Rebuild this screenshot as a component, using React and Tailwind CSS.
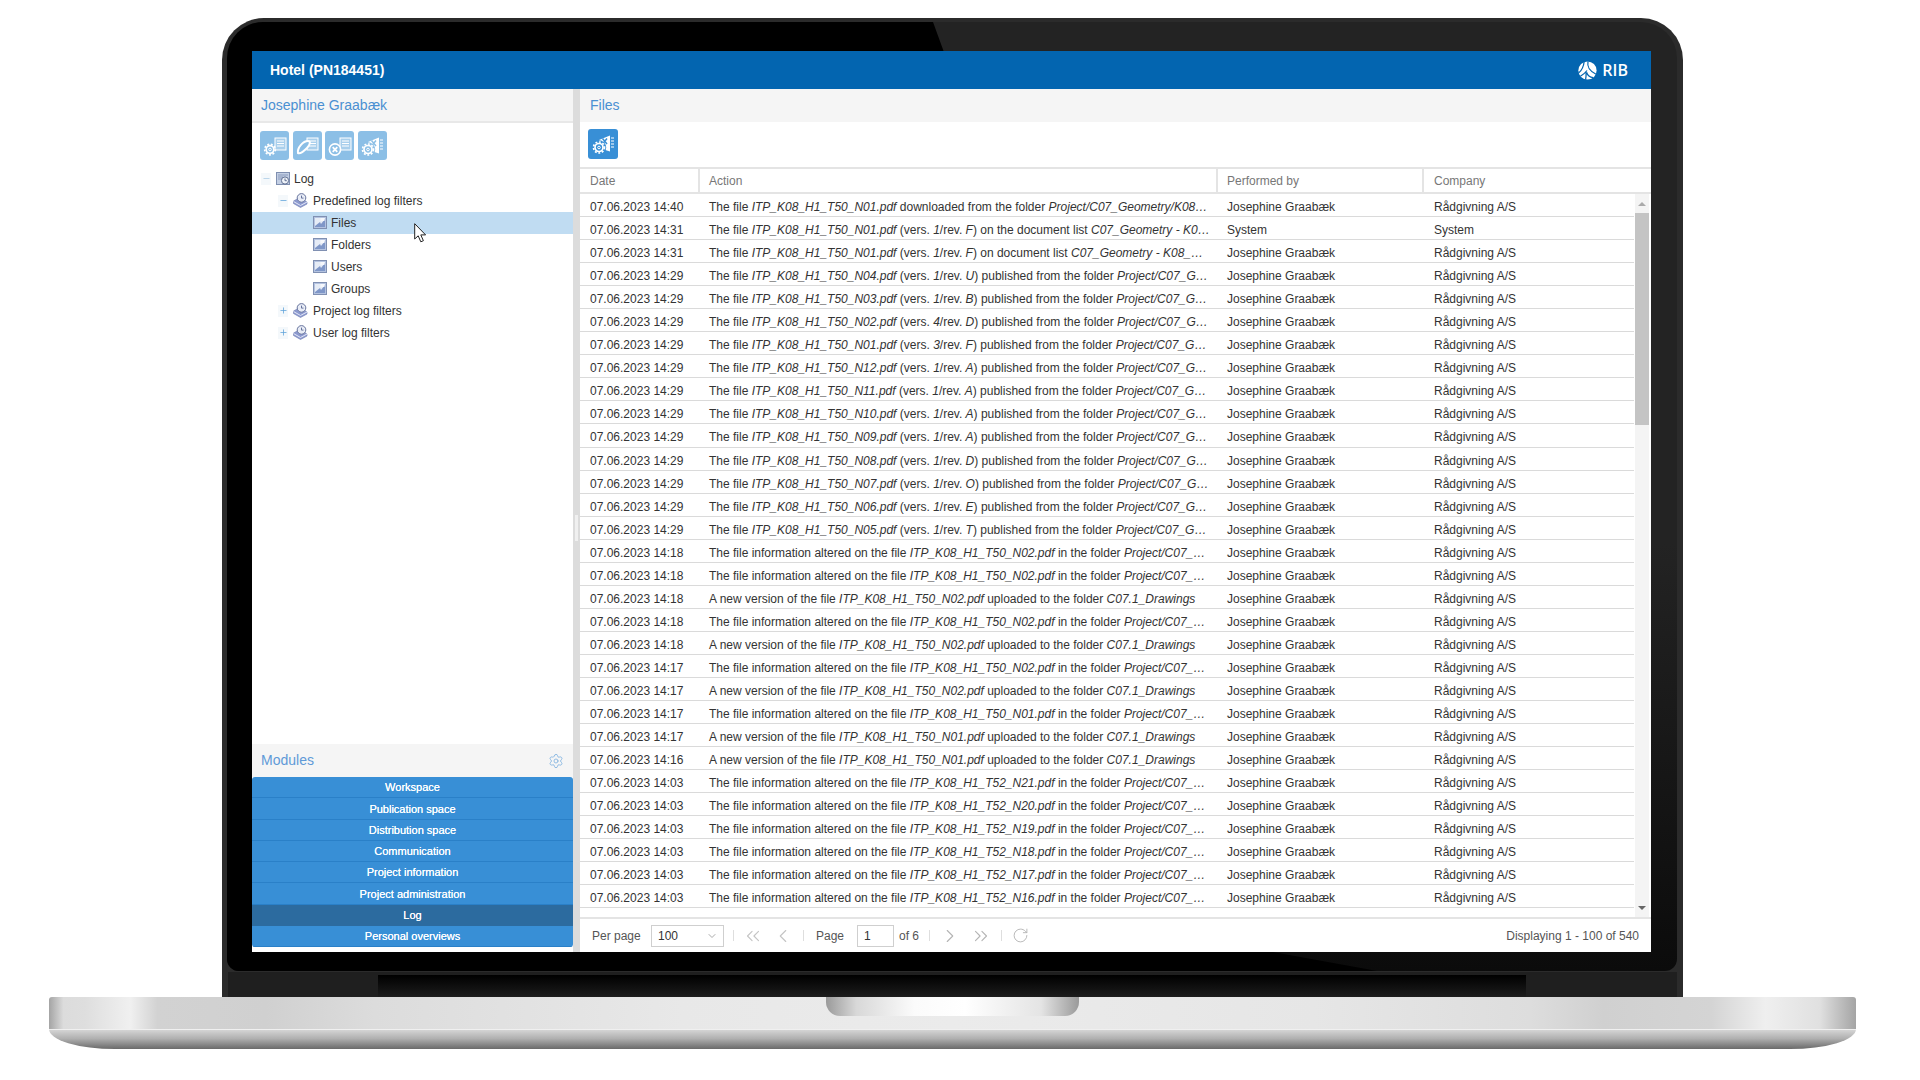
import React from "react";
import { Settings, ChevronDown, ChevronsLeft, ChevronLeft, ChevronRight, ChevronsRight, RotateCw, Plus, Minus } from "lucide-react";

const file = (n) => <i>{`ITP_K08_H1_${n}.pdf`}</i>;
const pub = (n, v, r) => (
  <>The file {file(n)} (vers. <i>{v}</i>/rev. <i>{r}</i>) published from the folder <i>Project/C07_G…</i></>
);
const alt = (n) => (
  <>The file information altered on the file {file(n)} in the folder <i>Project/C07_…</i></>
);
const neu = (n) => (
  <>A new version of the file {file(n)} uploaded to the folder <i>C07.1_Drawings</i></>
);

const rows = [
  ["14:40", <>The file {file("T50_N01")} downloaded from the folder <i>Project/C07_Geometry/K08…</i></>],
  ["14:31", <>The file {file("T50_N01")} (vers. <i>1</i>/rev. <i>F</i>) on the document list <i>C07_Geometry - K0…</i></>, true],
  ["14:31", <>The file {file("T50_N01")} (vers. <i>1</i>/rev. <i>F</i>) on document list <i>C07_Geometry - K08_…</i></>],
  ["14:29", pub("T50_N04", "1", "U")],
  ["14:29", pub("T50_N03", "1", "B")],
  ["14:29", pub("T50_N02", "4", "D")],
  ["14:29", pub("T50_N01", "3", "F")],
  ["14:29", pub("T50_N12", "1", "A")],
  ["14:29", pub("T50_N11", "1", "A")],
  ["14:29", pub("T50_N10", "1", "A")],
  ["14:29", pub("T50_N09", "1", "A")],
  ["14:29", pub("T50_N08", "1", "D")],
  ["14:29", pub("T50_N07", "1", "O")],
  ["14:29", pub("T50_N06", "1", "E")],
  ["14:29", pub("T50_N05", "1", "T")],
  ["14:18", alt("T50_N02")],
  ["14:18", alt("T50_N02")],
  ["14:18", neu("T50_N02")],
  ["14:18", alt("T50_N02")],
  ["14:18", neu("T50_N02")],
  ["14:17", alt("T50_N02")],
  ["14:17", neu("T50_N02")],
  ["14:17", alt("T50_N01")],
  ["14:17", neu("T50_N01")],
  ["14:16", neu("T50_N01")],
  ["14:03", alt("T52_N21")],
  ["14:03", alt("T52_N20")],
  ["14:03", alt("T52_N19")],
  ["14:03", alt("T52_N18")],
  ["14:03", alt("T52_N17")],
  ["14:03", alt("T52_N16")],
  ["14:03", alt("T52_N15")],
];

const modules = ["Workspace", "Publication space", "Distribution space", "Communication", "Project information", "Project administration", "Log", "Personal overviews"];

function Gear({ cx, cy, r = 4.6, ring = "white" }) {
  return (
    <g fill="none" stroke={ring}>
      <circle cx={cx} cy={cy} r={r} strokeWidth="1.7" />
      <circle cx={cx} cy={cy} r={r + 1.5} strokeWidth="1.7" strokeDasharray="1.9 1.7" />
      <circle cx={cx} cy={cy} r={1.3} strokeWidth="1" />
    </g>
  );
}

function Sheet() {
  return (
    <g>
      <rect x="13" y="3" width="11" height="12" fill="white" fillOpacity="0.25" stroke="white" strokeWidth="1" />
      <path d="M15 6h7M15 8.5h7M15 11h7" stroke="white" strokeWidth="1" />
    </g>
  );
}

function ToolIcon({ kind, bg = "#8cbfe6" }) {
  return (
    <svg width="26" height="22" viewBox="0 0 26 22">
      {kind === "export" ? (
        <g>
          <path d="M9 7 L20 2.5 V18.5 L9 15 Z" fill="white" />
          <path d="M12.5 5.5 L17 11 M17 5.5 L12.5 11" stroke={bg} strokeWidth="1.5" />
          <path d="M21 5h3M21 8h3M21 11h3M21 14h3" stroke="white" strokeWidth="1.2" />
          <circle cx="9" cy="14.5" r="7.2" fill={bg} />
          <Gear cx={9} cy={14.5} r={4} />
        </g>
      ) : (
        <g>
          <Sheet />
          {kind === "new" && <Gear cx={8} cy={14.5} r={3.8} />}
          {kind === "edit" && (
            <path d="M4 18 C3 13 9 6 14 6 C17 6 16 10 13 13 C10 16 6 19 4 18 Z" fill={bg} stroke="white" strokeWidth="2" />
          )}
          {kind === "delete" && (
            <g>
              <circle cx="8" cy="14.5" r="5.6" fill={bg} stroke="white" strokeWidth="1.6" />
              <path d="M5.7 12.2 L10.3 16.8 M10.3 12.2 L5.7 16.8" stroke="white" strokeWidth="1.8" />
            </g>
          )}
        </g>
      )}
    </svg>
  );
}

function LogIcon() {
  return (
    <svg width="15" height="14" viewBox="0 0 15 14">
      <rect x="1.5" y="0.5" width="13" height="12" fill="#c3cfe4" stroke="#7f8fb0" />
      <path d="M3 3h10M3 5h5M3 7h4" stroke="#8b9bbc" strokeWidth="1" />
      <circle cx="10" cy="8.5" r="3.6" fill="#eef2f8" stroke="#5f6f92" />
      <path d="M10 6.5v2.2h1.8" stroke="#5f6f92" fill="none" />
    </svg>
  );
}

function StackIcon() {
  return (
    <svg width="15" height="15" viewBox="0 0 15 15">
      <path d="M0.5 8 L7 4.5 L14 9 V11 L7.5 14.5 L0.5 10.5 Z" fill="#8d9ad0" stroke="#6f7cb0" strokeWidth="0.6" />
      <path d="M0.5 8.5 L7.5 12.5 L14 9" fill="none" stroke="#e4e8f5" strokeWidth="1" />
      <circle cx="8.5" cy="4.9" r="4.3" fill="#e8ecf6" stroke="#66739c" />
      <path d="M8.5 2.6v2.5h2" stroke="#66739c" fill="none" />
    </svg>
  );
}

function FilterIcon() {
  return (
    <svg width="14" height="13" viewBox="0 0 14 13">
      <rect x="0.5" y="0.5" width="13" height="12" fill="#b4c3e0" stroke="#8090b2" />
      <rect x="2" y="2" width="10" height="9" fill="#e6ecf6" />
      <path d="M2 10 L7 6 L8 8 L12 3 V11 H2 Z" fill="#7f97c8" />
      <rect x="7.5" y="2" width="4" height="3" fill="#f6f8fc" />
    </svg>
  );
}

function Expander({ plus, pale }) {
  const cls = pale ? "text-[#a9cbe6]" : "text-[#5ca2da]";
  return (
    <span className={`w-[10px] h-[12px] flex items-center justify-center bg-[#f4f8fb] ${cls}`}>
      {plus ? <Plus size={9} strokeWidth={2} /> : <Minus size={9} strokeWidth={2} />}
    </span>
  );
}

function Logo() {
  return (
    <svg width="19" height="19" viewBox="0 0 20 20">
      <circle cx="10" cy="10" r="9.6" fill="white" />
      <path d="M6.5 0.5 C6 5 5 9 0.8 12.5 M10.5 0.5 C9.5 6 11 10 19 14 M2.5 16 C6 14 8 12 9.5 10 M16 17.5 C12 17 10 15 9 11.8 M8 19.5 C8.5 17 8.6 14 8.5 12" stroke="#0365b0" strokeWidth="1.3" fill="none" />
    </svg>
  );
}

function Sep() {
  return <span className="block w-px h-[11px] bg-[#dedede] shrink-0" />;
}

export default function App() {
  return (
    <div className="relative w-[1920px] h-[1080px] bg-white overflow-hidden flex flex-col pt-[18px] font-['Liberation_Sans',Arial,sans-serif] text-[12px] text-[#333]">
      {/* Lid */}
      <div className="relative ml-[222px] w-[1461px] h-[979px] rounded-t-[42px] bg-[#2b2b2b] pl-[30px] pr-[32px] pt-[33px]">
        <div className="absolute left-[5px] right-[6px] top-[4px] h-[949px] rounded-t-[36px] rounded-b-[12px] overflow-hidden bg-[linear-gradient(180deg,#232323_0%,#232323_55%,#0b0b0b_100%)]">
          <div className="absolute inset-0 bg-black [clip-path:polygon(0_0,706px_0,718px_33px,718px_870px,1150px_949px,0_949px)]" />
        </div>
        <div className="absolute left-[6px] right-[6px] top-[954px] bottom-0 bg-[#1f1f1f]" />
        <div className="absolute left-[156px] w-[1148px] top-[957px] h-[22px] bg-[linear-gradient(180deg,#000000_0%,#1d1d1d_100%)]" />

        {/* Screen */}
        <div className="relative w-[1399px] h-[901px] flex flex-col bg-white">
          <header className="h-[38px] shrink-0 bg-[#0365b0] flex items-center justify-between pl-[18px] pr-[23px]">
            <span className="text-[14px] font-bold text-white">Hotel (PN184451)</span>
            <span className="flex items-center gap-[5px]">
              <Logo />
              <span className="text-[16px] leading-none text-white font-['Open_Sans',sans-serif] font-semibold">RIB</span>
            </span>
          </header>

          <div className="flex-1 flex min-h-0">
            {/* Left panel */}
            <aside className="w-[321px] shrink-0 flex flex-col">
              <div className="h-[34px] shrink-0 bg-[#f5f5f5] border-b-2 border-[#e8e8e8] pl-[9px] flex items-center text-[14px] text-[#4a90d2]">
                Josephine Graabæk
              </div>
              <div className="h-[44px] shrink-0 pl-[8px] pt-[8px] flex gap-[3.5px]">
                {["new", "edit", "delete", "export"].map((k) => (
                  <button key={k} className="w-[29px] h-[29px] rounded-[3px] bg-[#8cbfe6] flex items-center justify-center">
                    <ToolIcon kind={k} />
                  </button>
                ))}
              </div>
              <div className="flex-1 min-h-0 pt-[0.5px]">
                <div className="h-[22px] flex items-center pl-[9px] gap-[4px]"><Expander pale /><LogIcon /><span>Log</span></div>
                <div className="h-[22px] flex items-center pl-[26px] gap-[5px]"><Expander /><StackIcon /><span>Predefined log filters</span></div>
                {["Files", "Folders", "Users", "Groups"].map((t, i) => (
                  <div key={t} className={`h-[22px] flex items-center pl-[61px] gap-[4px] ${i === 0 ? "bg-[#c0dcf2]" : ""}`}><FilterIcon /><span>{t}</span></div>
                ))}
                <div className="h-[22px] flex items-center pl-[26px] gap-[5px]"><Expander plus /><StackIcon /><span>Project log filters</span></div>
                <div className="h-[22px] flex items-center pl-[26px] gap-[5px]"><Expander plus /><StackIcon /><span>User log filters</span></div>
              </div>
              <div className="h-[33px] shrink-0 bg-[#f5f5f5] pl-[9px] pr-[9px] flex items-center justify-between text-[14px] text-[#5f9ad8]">
                <span>Modules</span>
                <Settings size={16} strokeWidth={1.4} className="text-[#8ab8e2]" />
              </div>
              <div className="shrink-0 flex flex-col mb-[5px] rounded-[3px] overflow-hidden">
                {modules.map((m) => (
                  <div key={m} className={`h-[21.25px] pt-[1px] flex items-center justify-center text-[11px] text-white [text-shadow:0_0_0.6px_#ffffff] border-b border-[#2a80c8] ${m === "Log" ? "bg-[#2c6b9f] !border-[#2c6b9f]" : "bg-[#388fd6]"}`}>
                    {m}
                  </div>
                ))}
              </div>
            </aside>

            {/* Splitter */}
            <div className="w-[7px] shrink-0 bg-[#dcdcdc] flex items-center justify-center">
              <span className="w-[3px] h-[26px] mt-[14px] bg-[#f0f0f0]" />
            </div>

            {/* Right panel */}
            <main className="flex-1 min-w-0 flex flex-col">
              <div className="h-[33px] shrink-0 bg-[#f5f5f5] pl-[10px] flex items-center text-[14px] text-[#4a90d2]">Files</div>
              <div className="h-[45px] shrink-0 pl-[8px] pt-[7px]">
                <button className="w-[30px] h-[30px] rounded-[3px] bg-[#388fd6] flex items-center justify-center">
                  <ToolIcon kind="export" bg="#388fd6" />
                </button>
              </div>
              <div className="h-[27px] shrink-0 border-t-2 border-b-2 border-[#e4e4e4] grid grid-cols-[120px_518px_206px_1fr] text-[#777]">
                <div className="pl-[10px] flex items-center border-r-2 border-[#e4e4e4]">Date</div>
                <div className="pl-[9px] flex items-center border-r-2 border-[#e4e4e4]">Action</div>
                <div className="pl-[9px] flex items-center border-r-2 border-[#e4e4e4]">Performed by</div>
                <div className="pl-[10px] flex items-center">Company</div>
              </div>
              <div className="h-[723px] shrink-0 flex overflow-hidden">
                <div className="w-[1054px] shrink-0">
                  {rows.map(([time, action, sys], i) => (
                    <div key={i} className={`h-[23.05px] grid grid-cols-[120px_518px_206px_1fr] items-center border-b border-[#dadada] ${i === 31 ? "pt-[9px]" : "pt-[4px]"}`}>
                      <div className="pl-[10px] whitespace-nowrap">07.06.2023 {time}</div>
                      <div className="pl-[9px] whitespace-nowrap">{action}</div>
                      <div className="pl-[9px] whitespace-nowrap">{sys ? "System" : "Josephine Graabæk"}</div>
                      <div className="pl-[10px] whitespace-nowrap">{sys ? "System" : "Rådgivning A/S"}</div>
                    </div>
                  ))}
                </div>
                <div className="w-[14px] ml-[1px] bg-[#f4f4f4] flex flex-col items-center">
                  <div className="h-[19px] w-full flex items-center justify-center">
                    <span className="w-0 h-0 border-x-[4px] border-x-transparent border-b-[4px] border-b-[#aaaaaa]" />
                  </div>
                  <div className="w-full h-[212px] bg-[#c4c4c4]" />
                  <div className="flex-1" />
                  <div className="h-[19px] w-full flex items-center justify-center">
                    <span className="w-0 h-0 border-x-[4px] border-x-transparent border-t-[4px] border-t-[#666666]" />
                  </div>
                </div>
              </div>
              <div className="flex-1 min-h-0 border-t-2 border-[#e4e4e4] flex items-center pl-[12px] pr-[12px] text-[#555] whitespace-nowrap">
                <span className="w-[47px]">Per page</span>
                <div className="ml-[12px] w-[73px] h-[22px] border border-[#cfcfcf] flex items-center justify-between pl-[6px] pr-[5px] text-[#333]">
                  <span>100</span>
                  <ChevronDown size={12} className="text-[#aaaaaa]" />
                </div>
                <span className="ml-[9px]"><Sep /></span>
                <ChevronsLeft size={22} strokeWidth={1.2} className="ml-[8px] text-[#c4c4c4]" />
                <ChevronLeft size={22} strokeWidth={1.2} className="ml-[8px] text-[#c4c4c4]" />
                <span className="ml-[9px]"><Sep /></span>
                <span className="ml-[12px] w-[30px]">Page</span>
                <div className="ml-[11px] w-[37px] h-[22px] border border-[#cfcfcf] flex items-center pl-[6px] text-[#333]">1</div>
                <span className="ml-[5px] w-[20px]">of 6</span>
                <span className="ml-[10px]"><Sep /></span>
                <ChevronRight size={22} strokeWidth={1.2} className="ml-[9px] text-[#b4b4b4]" />
                <ChevronsRight size={22} strokeWidth={1.2} className="ml-[9px] text-[#b4b4b4]" />
                <span className="ml-[9px]"><Sep /></span>
                <RotateCw size={17} strokeWidth={1.3} className="ml-[10px] text-[#b4b4b4]" />
                <span className="ml-auto">Displaying 1 - 100 of 540</span>
              </div>
            </main>
          </div>

          {/* Pointer */}
          <svg className="absolute left-[162px] top-[172px]" width="13" height="20" viewBox="0 0 13 20">
            <path d="M0.7 0.7 V16 L4.2 12.8 L6.8 18.8 L9.4 17.7 L6.8 11.9 H11.6 Z" fill="white" stroke="#222" strokeWidth="1" />
          </svg>
        </div>
      </div>

      {/* Base */}
      <div className="relative ml-[49px] w-[1807px] h-[52px] shrink-0">
        <div className="h-[32px] rounded-tl-[3px] rounded-tr-[3px] bg-[linear-gradient(90deg,#a4a4a4_0%,#dcdcdc_0.8%,#dedede_2%,#f0f0f0_4.5%,#d2d2d2_6%,#d0d0d0_12%,#dcdcdc_18%,#e8e8e8_35%,#ebebeb_50%,#e6e6e6_70%,#dddddd_82%,#d0d0d0_86%,#d4d4d4_92%,#efefef_95%,#e0e0e0_98%,#a4a4a4_100%)]" />
        <div className="h-[20px] rounded-bl-[66px_20px] rounded-br-[66px_20px] border-t border-[#f0f0f0] bg-[linear-gradient(180deg,#d4d4d4_0%,#b0b0b0_45%,#6a6a6a_100%)]" />
        <div className="absolute left-[777px] top-0 w-[253px] h-[19px] rounded-b-[14px] bg-[linear-gradient(90deg,#9a9a9a_0%,#d8d8d8_12%,#fbfbfb_35%,#ffffff_55%,#e4e4e4_85%,#9a9a9a_100%)]" />
      </div>
    </div>
  );
}
